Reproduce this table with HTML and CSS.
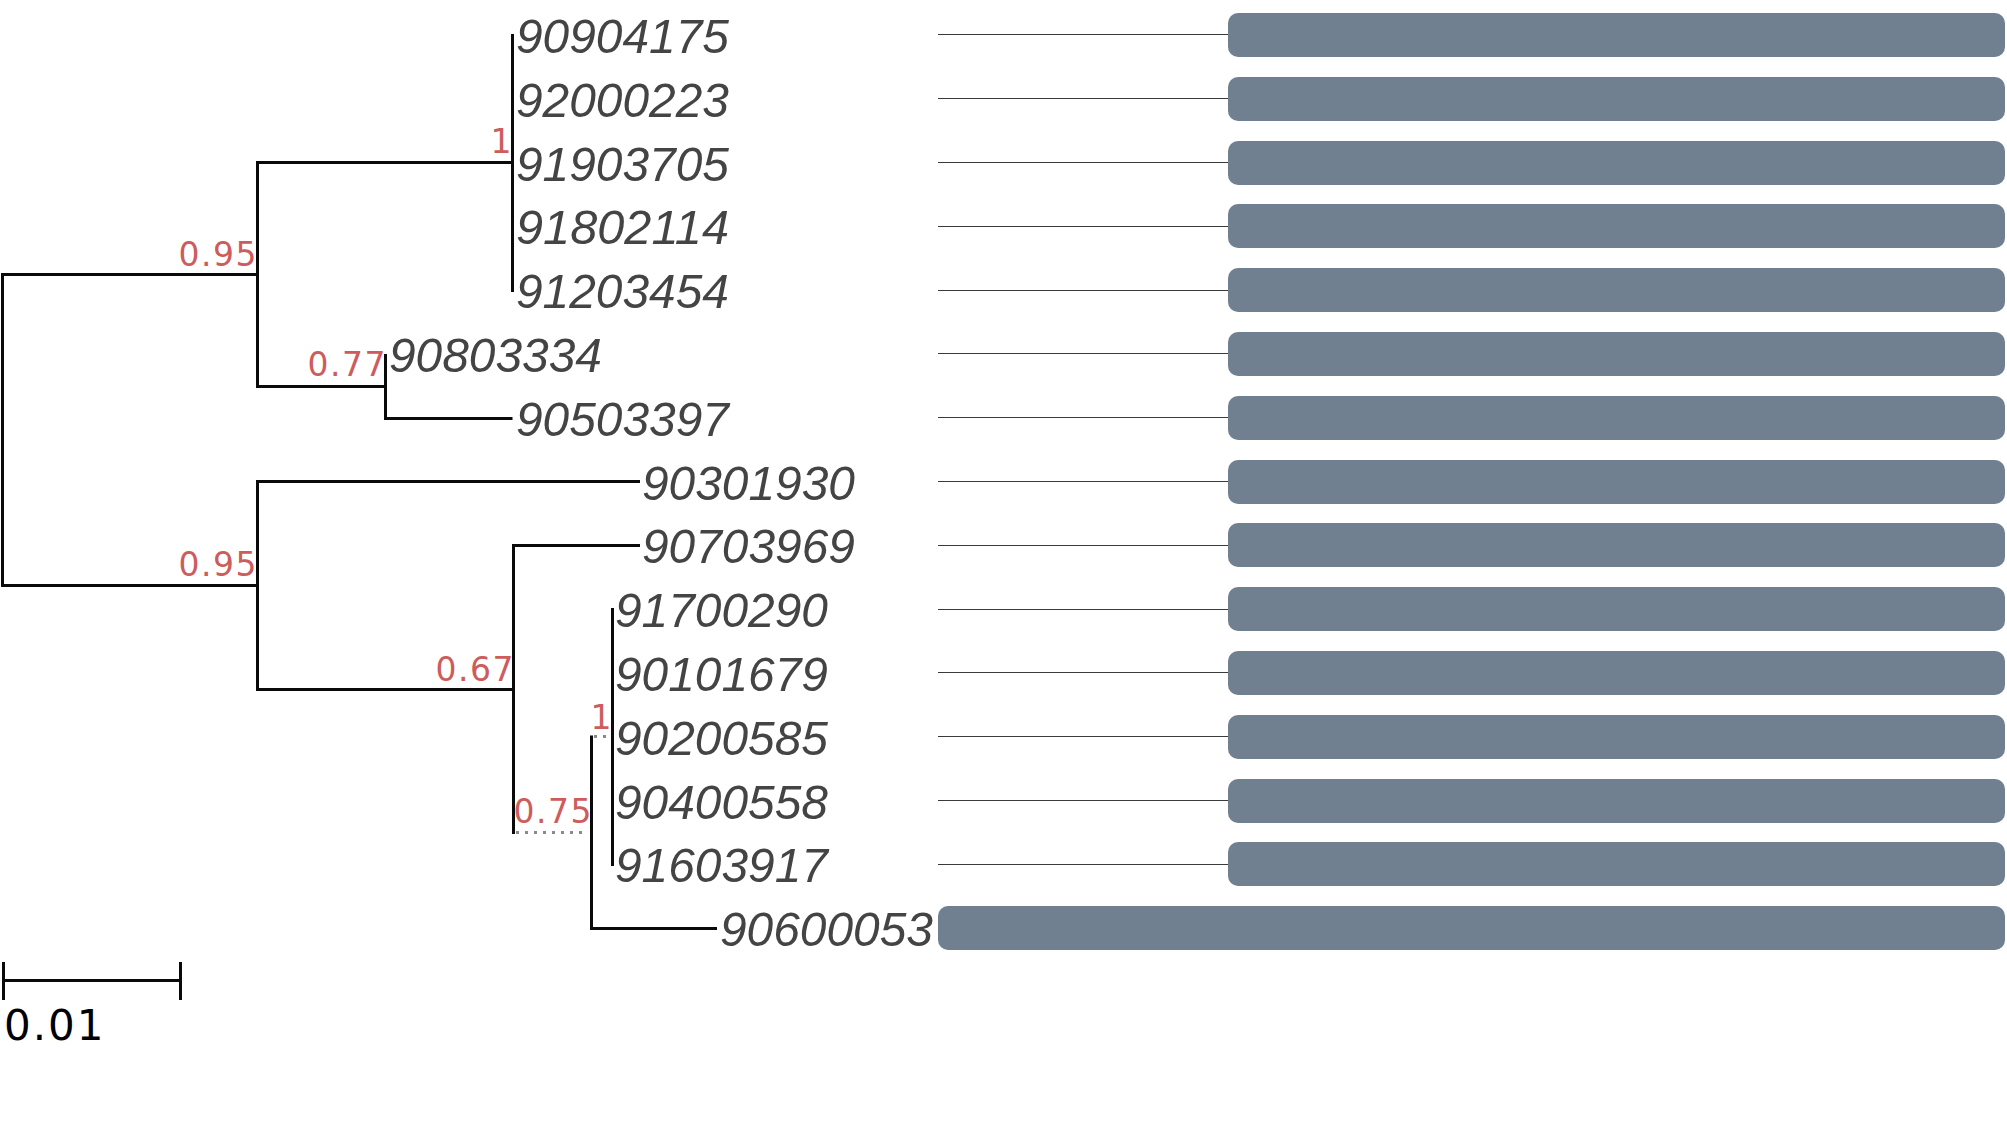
FILE: index.html
```html
<!DOCTYPE html>
<html>
<head>
<meta charset="utf-8">
<link rel="stylesheet" href="styles.css">
</head>
<body>
<div class="page">
  <svg class="tree" width="938" height="1140" viewBox="0 0 938 1140">
    <g class="branches">
      <path d="M257.5 274.5 H2.5 V585.5 H257.5"/>
      <path d="M512.5 162.5 H257.5 V386.5 H385.5"/>
      <path d="M512.5 34 V292"/>
      <path d="M385.5 354 V418.5 H512.5"/>
      <path d="M640 481.5 H257.5 V689.5 H513.5"/>
      <path d="M640 545.5 H513.5 V834"/>
      <path d="M591.5 735.5 V928.5 H717"/>
      <path d="M612.5 608 V866"/>
    </g>
    <g class="dotted">
      <path d="M516 832.5 H588"/>
      <path d="M594 736.5 H610"/>
    </g>
    <g class="support">
      <text x="258" y="266">0.95</text>
      <text x="513" y="153">1</text>
      <text x="387" y="376">0.77</text>
      <text x="258" y="576">0.95</text>
      <text x="515" y="681">0.67</text>
      <text x="593" y="823">0.75</text>
      <text x="613" y="729">1</text>
    </g>
    <g class="leaf">
      <text x="516" y="53" textLength="213" lengthAdjust="spacingAndGlyphs">90904175</text>
      <text x="516" y="116.8" textLength="213" lengthAdjust="spacingAndGlyphs">92000223</text>
      <text x="516" y="180.6" textLength="213" lengthAdjust="spacingAndGlyphs">91903705</text>
      <text x="516" y="244.4" textLength="213" lengthAdjust="spacingAndGlyphs">91802114</text>
      <text x="516" y="308.2" textLength="213" lengthAdjust="spacingAndGlyphs">91203454</text>
      <text x="389" y="372" textLength="213" lengthAdjust="spacingAndGlyphs">90803334</text>
      <text x="516" y="435.8" textLength="213" lengthAdjust="spacingAndGlyphs">90503397</text>
      <text x="642" y="499.6" textLength="213" lengthAdjust="spacingAndGlyphs">90301930</text>
      <text x="642" y="563.4" textLength="213" lengthAdjust="spacingAndGlyphs">90703969</text>
      <text x="615" y="627.2" textLength="213" lengthAdjust="spacingAndGlyphs">91700290</text>
      <text x="615" y="691" textLength="213" lengthAdjust="spacingAndGlyphs">90101679</text>
      <text x="615" y="754.8" textLength="213" lengthAdjust="spacingAndGlyphs">90200585</text>
      <text x="615" y="818.6" textLength="213" lengthAdjust="spacingAndGlyphs">90400558</text>
      <text x="615" y="882.4" textLength="213" lengthAdjust="spacingAndGlyphs">91603917</text>
      <text x="720" y="946.2" textLength="213" lengthAdjust="spacingAndGlyphs">90600053</text>
    </g>
    <g class="scale">
      <path d="M3.5 962 V1000 M3.5 980.5 H180.5 M180.5 962 V1000"/>
      <text x="4" y="1040">0.01</text>
    </g>
  </svg>
  <div class="rows">
    <div class="row"><div class="link"></div><div class="bar"></div></div>
    <div class="row"><div class="link"></div><div class="bar"></div></div>
    <div class="row"><div class="link"></div><div class="bar"></div></div>
    <div class="row"><div class="link"></div><div class="bar"></div></div>
    <div class="row"><div class="link"></div><div class="bar"></div></div>
    <div class="row"><div class="link"></div><div class="bar"></div></div>
    <div class="row"><div class="link"></div><div class="bar"></div></div>
    <div class="row"><div class="link"></div><div class="bar"></div></div>
    <div class="row"><div class="link"></div><div class="bar"></div></div>
    <div class="row"><div class="link"></div><div class="bar"></div></div>
    <div class="row"><div class="link"></div><div class="bar"></div></div>
    <div class="row"><div class="link"></div><div class="bar"></div></div>
    <div class="row"><div class="link"></div><div class="bar"></div></div>
    <div class="row"><div class="link"></div><div class="bar"></div></div>
    <div class="row"><div class="bar bar-full"></div></div>
  </div>
</div>
</body>
</html>
```
FILE: styles.css
```css
html, body {
  margin: 0;
  padding: 0;
  background: #ffffff;
}

.page {
  display: flex;
  width: 2007px;
  height: 1140px;
  overflow: hidden;
}

.tree {
  display: block;
  flex: none;
}

.branches path {
  fill: none;
  stroke: #0a0a0a;
  stroke-width: 3;
  stroke-linejoin: miter;
}

.dotted path {
  fill: none;
  stroke: #8a8a8a;
  stroke-width: 3;
  stroke-dasharray: 3 6;
}

.support text {
  font-family: "DejaVu Sans", sans-serif;
  font-size: 33px;
  letter-spacing: 1.5px;
  fill: #cd5c5c;
  text-anchor: end;
}

.leaf text {
  font-family: "Liberation Sans", Arial, sans-serif;
  font-style: italic;
  font-size: 49px;
  fill: #444444;
}

.scale path {
  fill: none;
  stroke: #0a0a0a;
  stroke-width: 3;
}

.scale text {
  font-family: "DejaVu Sans", sans-serif;
  font-size: 42px;
  letter-spacing: 2px;
  fill: #000000;
}

.rows {
  width: 1067px;
  flex: none;
  display: flex;
  flex-direction: column;
  padding-top: 3.1px;
}

.row {
  height: 63.8px;
  display: flex;
  align-items: center;
}

.link {
  flex: 1;
  height: 1px;
  background: #3a3a3a;
}

.bar {
  width: 777px;
  height: 44px;
  border-radius: 10px;
  background: #708090;
}

.bar-full {
  flex: 1;
  width: auto;
}
```
